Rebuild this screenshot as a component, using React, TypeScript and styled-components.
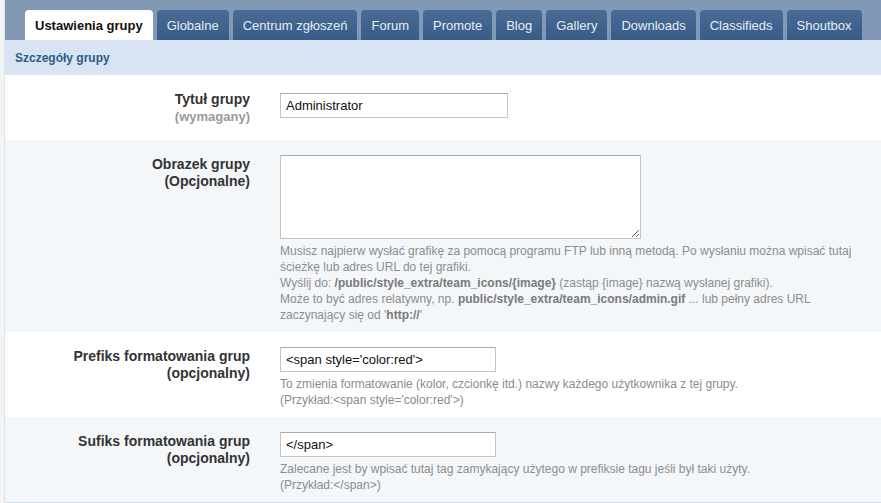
import React from "react";
import styled, { createGlobalStyle } from "styled-components";

const GlobalStyle = createGlobalStyle`
    html, body {
        margin: 0;
        padding: 0;
        background: #f3f4f6;
        font-family: "Liberation Sans", Arial, sans-serif;
        font-size: 13px;
        color: #333;
    }
`;

const Page = styled.div`
    margin-left: 4px;
    border-left: 1px solid #dbe4ee;
    border-bottom: 1px solid #d3dfee;
    background: #fff;
`;

// Blue strip with the tab buttons
const TabBar = styled.div`
    display: flex;
    align-items: flex-end;
    gap: 4px;
    height: 40px;
    padding-left: 20px;
    background: #8299b5;
`;

const Tab = styled.div<{ $active?: boolean }>`
    height: 30px;
    display: flex;
    align-items: center;
    padding: 0 10px;
    border-radius: 4px 4px 0 0;
    font-size: 13px;
    white-space: nowrap;
    font-weight: ${({ $active }) => ($active ? "bold" : "normal")};
    color: ${({ $active }) => ($active ? "#111" : "#e6edf5")};
    background: ${({ $active }) =>
        $active ? "#fff" : "linear-gradient(180deg, #4a6b95 0%, #385b88 100%)"};
`;

const SubHeader = styled.div`
    height: 35px;
    display: flex;
    align-items: center;
    padding-left: 10px;
    background: #d8e4f1;
    color: #2d5b8b;
    font-weight: bold;
    font-size: 12px;
`;

const Row = styled.div<{ $alt?: boolean; $first?: boolean }>`
    display: grid;
    grid-template-columns: 245px 1fr;
    column-gap: 30px;
    padding: 15px 0 ${({ $first }) => ($first ? 15 : 9)}px;
    background: ${({ $alt }) => ($alt ? "#f4f7fa" : "#fff")};
`;

const Label = styled.div`
    text-align: right;
    font-weight: bold;
    font-size: 14px;
    line-height: 17px;
    color: #333;
    padding-top: 1px;
`;

const Hint = styled.div<{ $muted?: boolean }>`
    color: ${({ $muted }) => ($muted ? "#9a9a9a" : "#333")};
    font-size: ${({ $muted }) => ($muted ? "13px" : "14px")};
`;

const Field = styled.div`
    display: flex;
    flex-direction: column;
    align-items: flex-start;
`;

const TextInput = styled.input<{ $width: number; $offset?: number }>`
    box-sizing: border-box;
    width: ${({ $width }) => $width}px;
    height: 25px;
    margin: ${({ $offset }) => $offset ?? 0}px 0 0;
    padding: 0 5px;
    border: 1px solid #c4c4c4;
    border-top-color: #a9a9a9;
    background: #fff;
    font-family: "Liberation Sans", Arial, sans-serif;
    font-size: 13px;
    color: #111;
    outline: none;
`;

const TextArea = styled.textarea`
    box-sizing: border-box;
    width: 361px;
    height: 84px;
    border: 1px solid #c4c4c4;
    border-top-color: #a9a9a9;
    background: #fff;
    margin: 0;
    display: block;
`;

const Help = styled.div`
    margin-top: 4px;
    max-width: 582px;
    font-size: 12px;
    line-height: 16px;
    color: #8c8c8c;

    b {
        color: #7a7a7a;
    }
`;

const tabs = [
    "Ustawienia grupy",
    "Globalne",
    "Centrum zgłoszeń",
    "Forum",
    "Promote",
    "Blog",
    "Gallery",
    "Downloads",
    "Classifieds",
    "Shoutbox",
];

export default function App() {
    return (
        <>
            <GlobalStyle />
            <Page>
                <TabBar>
                    {tabs.map((t, i) => (
                        <Tab key={t} $active={i === 0}>
                            {t}
                        </Tab>
                    ))}
                </TabBar>
                <SubHeader>Szczegóły grupy</SubHeader>

                <Row $first>
                    <Label>
                        Tytuł grupy
                        <Hint $muted>(wymagany)</Hint>
                    </Label>
                    <Field>
                        <TextInput $width={228} $offset={3} defaultValue="Administrator" />
                    </Field>
                </Row>

                <Row $alt>
                    <Label>
                        Obrazek grupy
                        <Hint>(Opcjonalne)</Hint>
                    </Label>
                    <Field>
                        <TextArea />
                        <Help>
                            Musisz najpierw wysłać grafikę za pomocą programu FTP lub inną metodą. Po
                            wysłaniu można wpisać tutaj ścieżkę lub adres URL do tej grafiki.
                            <br />
                            Wyślij do: <b>/public/style_extra/team_icons/{"{image}"}</b> (zastąp{" "}
                            {"{image}"} nazwą wysłanej grafiki).
                            <br />
                            Może to być adres relatywny, np.{" "}
                            <b>public/style_extra/team_icons/admin.gif</b> ... lub pełny adres URL
                            zaczynający się od '<b>http://</b>'
                        </Help>
                    </Field>
                </Row>

                <Row>
                    <Label>
                        Prefiks formatowania grup
                        <Hint>(opcjonalny)</Hint>
                    </Label>
                    <Field>
                        <TextInput $width={216} defaultValue="<span style='color:red'>" />
                        <Help>
                            To zmienia formatowanie (kolor, czcionkę itd.) nazwy każdego użytkownika z
                            tej grupy.
                            <br />
                            (Przykład:&lt;span style='color:red'&gt;)
                        </Help>
                    </Field>
                </Row>

                <Row $alt>
                    <Label>
                        Sufiks formatowania grup
                        <Hint>(opcjonalny)</Hint>
                    </Label>
                    <Field>
                        <TextInput $width={216} defaultValue="</span>" />
                        <Help>
                            Zalecane jest by wpisać tutaj tag zamykający użytego w prefiksie tagu jeśli
                            był taki użyty.
                            <br />
                            (Przykład:&lt;/span&gt;)
                        </Help>
                    </Field>
                </Row>
            </Page>
        </>
    );
}
